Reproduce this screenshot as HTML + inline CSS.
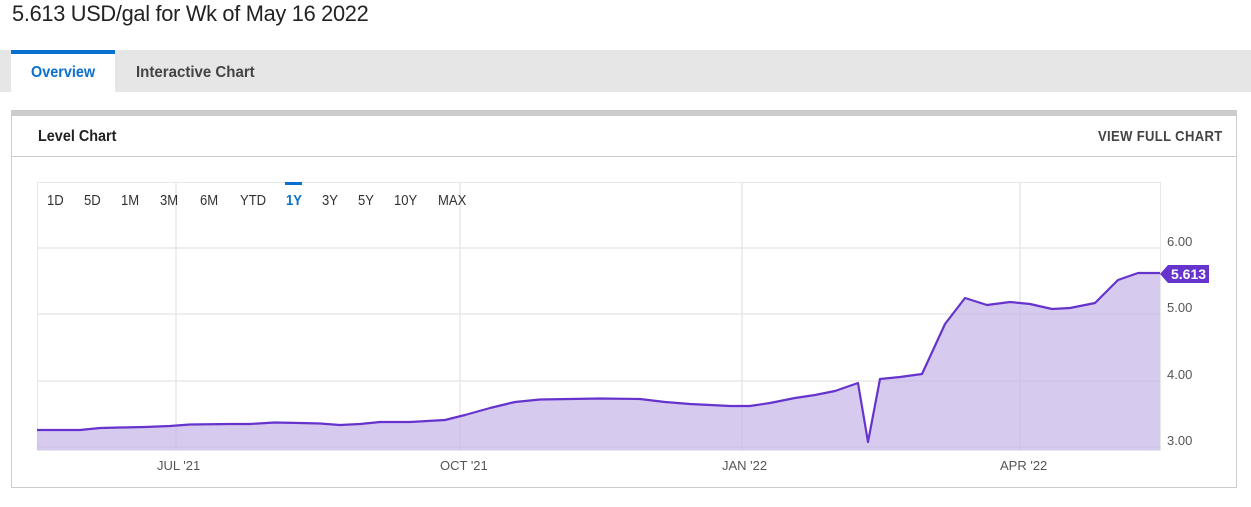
<!DOCTYPE html>
<html><head><meta charset="utf-8"><style>
body{margin:0;width:1251px;height:507px;background:#fff;font-family:"Liberation Sans",sans-serif;position:relative;overflow:hidden}
.t{position:absolute;left:12px;top:1px;font-size:22px;color:#222;letter-spacing:-0.3px;transform:scaleX(0.99);transform-origin:left;white-space:nowrap}
.tabs{position:absolute;left:0;top:50px;width:1251px;height:42px;background:#e6e6e6}
.tab1{position:absolute;left:11px;top:0;width:104px;height:42px;background:#fff;border-top:4px solid #0a70d0;box-sizing:border-box}
.tl{position:absolute;top:14px;font-size:16px;font-weight:bold;transform:scaleX(0.9);transform-origin:left;white-space:nowrap}
.card{position:absolute;left:11px;top:110px;width:1226px;height:378px;border:1px solid #ccc;border-top:6px solid #ccc;box-sizing:border-box}
.hd{position:absolute;left:0;top:0;width:100%;height:40px;border-bottom:1px solid #ccc}
.s{position:absolute;font-size:14.5px;color:#333;transform:scaleX(0.9);transform-origin:left;white-space:nowrap}
</style></head><body>
<div class="t">5.613 USD/gal for Wk of May 16 2022</div>
<div class="tabs"><div class="tab1"></div>
<div class="tl" style="left:31px;color:#0a70d0">Overview</div>
<div class="tl" style="left:136px;color:#444;transform:scaleX(0.94)">Interactive Chart</div></div>
<div class="card"><div class="hd">
<div class="tl" style="left:26px;top:12px;color:#222">Level Chart</div>
<div class="tl" style="left:1086px;top:12px;color:#444;font-size:15px;letter-spacing:0.4px;transform:scaleX(0.87)">VIEW FULL CHART</div></div></div>
<svg style="position:absolute;left:0;top:0" width="1251" height="507">
<rect x="37.5" y="182.5" width="1123" height="268" fill="none" stroke="#e8e8e8"/>
<g stroke="#e8e8e8" stroke-width="1.5">
<line x1="37" y1="248" x2="1160" y2="248"/><line x1="37" y1="314" x2="1160" y2="314"/><line x1="37" y1="381" x2="1160" y2="381"/><line x1="37" y1="447" x2="1160" y2="447"/>
<line x1="176" y1="182" x2="176" y2="450"/><line x1="460" y1="182" x2="460" y2="450"/><line x1="742" y1="182" x2="742" y2="450"/><line x1="1020" y1="182" x2="1020" y2="450"/>
</g>
<path d="M37,430 L80,430 100,428 120,427.5 145,427 170,426 190,424.5 230,424 250,424 275,422.5 300,423 320,423.5 340,425 360,424 380,422 410,422 445,420 465,415 490,408 515,402 540,399.5 570,399 600,398.5 640,399 665,402 690,404 710,405 730,406 750,406 770,403 795,398 815,395 835,391 858,383 868,442 880,379 900,377 922,374 945,324 965,298 987,305 1010,302 1030,304 1052,309 1070,308 1095,303 1118,280 1138,273 1160,273 L1160,450 L37,450Z" fill="#c5b3e8" fill-opacity="0.7"/>
<path d="M37,430 L80,430 100,428 120,427.5 145,427 170,426 190,424.5 230,424 250,424 275,422.5 300,423 320,423.5 340,425 360,424 380,422 410,422 445,420 465,415 490,408 515,402 540,399.5 570,399 600,398.5 640,399 665,402 690,404 710,405 730,406 750,406 770,403 795,398 815,395 835,391 858,383 868,442 880,379 900,377 922,374 945,324 965,298 987,305 1010,302 1030,304 1052,309 1070,308 1095,303 1118,280 1138,273 1160,273" fill="none" stroke="#6633cc" stroke-width="2.2" stroke-linejoin="round"/>
<path d="M1160,274 L1168,265 L1209,265 L1209,283 L1168,283Z" fill="#6633cc"/>
<text x="1171" y="279" font-size="14" font-weight="bold" fill="#fff" font-family="Liberation Sans">5.613</text>
<g font-size="13" fill="#555" font-family="Liberation Sans">
<text x="1167" y="246">6.00</text><text x="1167" y="312">5.00</text><text x="1167" y="379">4.00</text><text x="1167" y="445">3.00</text>
<text x="157" y="470">JUL '21</text><text x="440" y="470">OCT '21</text><text x="722" y="470">JAN '22</text><text x="1000" y="470">APR '22</text>
</g>
<rect x="285" y="182" width="17" height="3" fill="#0a70d0"/>
</svg>
<div class="s" style="left:47px;top:193px">1D</div>
<div class="s" style="left:84px;top:193px">5D</div>
<div class="s" style="left:121px;top:193px">1M</div>
<div class="s" style="left:160px;top:193px">3M</div>
<div class="s" style="left:200px;top:193px">6M</div>
<div class="s" style="left:240px;top:193px">YTD</div>
<div class="s" style="left:286px;top:193px;color:#0a70d0;font-weight:bold">1Y</div>
<div class="s" style="left:322px;top:193px">3Y</div>
<div class="s" style="left:358px;top:193px">5Y</div>
<div class="s" style="left:394px;top:193px">10Y</div>
<div class="s" style="left:438px;top:193px">MAX</div>
</body></html>
